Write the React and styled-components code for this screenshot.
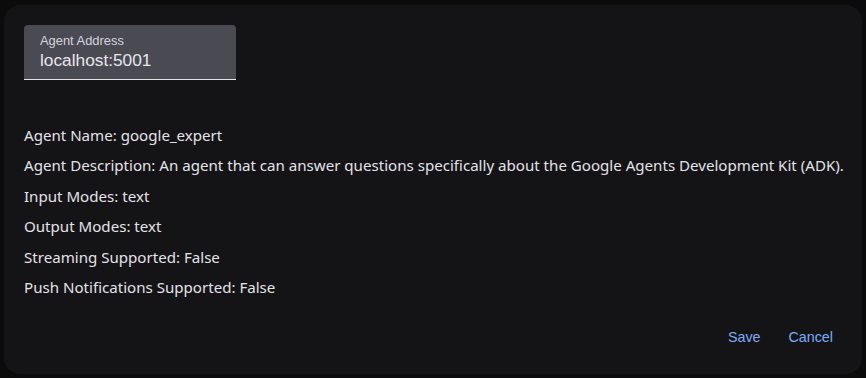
import React from "react";
import styled, { createGlobalStyle } from "styled-components";

const Global = createGlobalStyle`
  html, body { margin: 0; padding: 0; background: #0b0b0c; }
  body { width: 866px; height: 378px; overflow: hidden; }
`;

const Page = styled.div`
  padding: 5px 4px 4px 4px;
  box-sizing: border-box;
  height: 378px;
`;

const Dialog = styled.div`
  background: #141416;
  border-radius: 16px;
  height: 369px;
  box-sizing: border-box;
  padding: 20px 18px 0 20px;
  display: flex;
  flex-direction: column;
`;

const Field = styled.div`
  width: 212px;
  height: 55px;
  box-sizing: border-box;
  background: #4a4a52;
  border-radius: 4px 4px 0 0;
  border-bottom: 1px solid #e3e3e8;
  padding: 8px 16px 0 16px;
  font-family: "Liberation Sans", Arial, sans-serif;
`;

const Label = styled.div`
  font-size: 12.9px;
  color: #d4d4da;
  line-height: 15px;
`;

const Value = styled.div`
  font-size: 17.3px;
  color: #e6e6ea;
  line-height: 21px;
  margin-top: 2px;
`;

const Info = styled.div`
  margin-top: 45px;
  display: flex;
  flex-direction: column;
  font-family: "Noto Sans", "Open Sans", sans-serif;
  font-size: 15.1px;
  color: #e3e3e8;
`;

const Line = styled.div`
  line-height: 20px;
  margin-bottom: 10.4px;
`;

const Actions = styled.div`
  margin-top: 12px;
  display: flex;
  justify-content: flex-end;
  gap: 4px;
  margin-right: -1px;
`;

const Button = styled.button`
  background: none;
  border: none;
  color: #7cacf8;
  font-family: "Liberation Sans", Arial, sans-serif;
  font-size: 14.3px;
  padding: 0 12px;
  height: 36px;
  cursor: pointer;
`;

export default function App() {
  const lines = [
    "Agent Name: google_expert",
    "Agent Description: An agent that can answer questions specifically about the Google Agents Development Kit (ADK).",
    "Input Modes: text",
    "Output Modes: text",
    "Streaming Supported: False",
    "Push Notifications Supported: False",
  ];
  return (
    <>
      <Global />
      <Page>
        <Dialog>
          <Field>
            <Label>Agent Address</Label>
            <Value>localhost:5001</Value>
          </Field>
          <Info>
            {lines.map((l) => (
              <Line key={l}>{l}</Line>
            ))}
          </Info>
          <Actions>
            <Button>Save</Button>
            <Button>Cancel</Button>
          </Actions>
        </Dialog>
      </Page>
    </>
  );
}
